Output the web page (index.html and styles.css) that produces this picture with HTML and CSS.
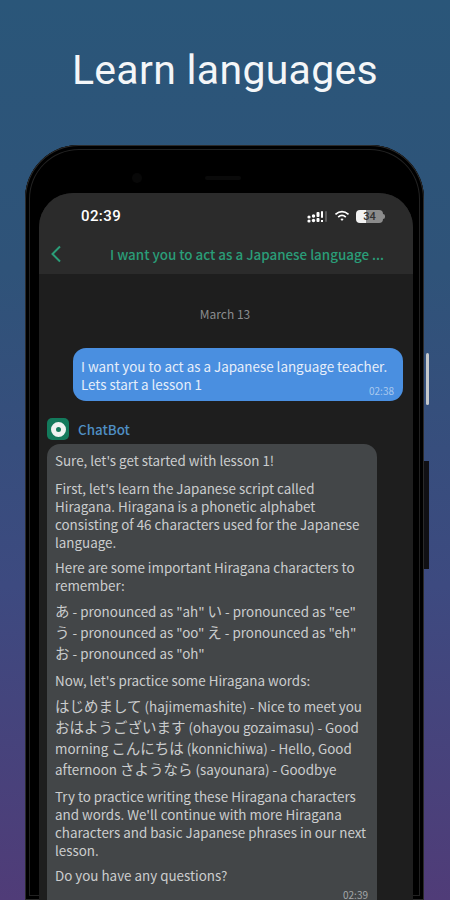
FILE: index.html
```html
<!DOCTYPE html>
<html>
<head>
    <title>Learn languages</title>
    <link rel="stylesheet" href="styles.css">
</head>
<body>
    <h1 class="headline">Learn languages</h1>

    <div class="phone">
        <div class="side-button volume"></div>
        <div class="side-button power"></div>
        <div class="camera"></div>
        <div class="speaker"></div>
        <div class="screen">
            <div class="top-bar">
                <div class="status-bar">
                    <span class="clock">02:39</span>
                    <div class="status-icons">
                        <svg class="signal" width="21" height="13" viewBox="0 0 21 13">
                            <g fill="#fff">
                                <circle cx="2" cy="7" r="1.6"/>
                                <circle cx="2" cy="11" r="1.6"/>
                                <circle cx="6.5" cy="6" r="1.7"/>
                                <circle cx="6.5" cy="10.5" r="1.7"/>
                                <rect x="9.5" y="2" width="3" height="5" rx="1"/>
                                <rect x="9.5" y="8" width="3" height="4" rx="1"/>
                                <rect x="14" y="1" width="2" height="7" rx="1"/>
                                <rect x="14" y="10" width="2" height="2"/>
                            </g>
                            <rect x="18" y="1" width="2" height="11" rx="1" fill="#5c5c5c"/>
                        </svg>
                        <svg class="wifi" width="16" height="12" viewBox="0 0 14 11">
                            <path d="M1 4 Q7 -1 13 4" fill="none" stroke="#fff" stroke-width="1.6"/>
                            <path d="M3.5 6.5 Q7 3.5 10.5 6.5" fill="none" stroke="#fff" stroke-width="1.6"/>
                            <path d="M5.5 8.3 L7 10 L8.5 8.3 Q7 7.2 5.5 8.3 Z" fill="#fff"/>
                        </svg>
                        <div class="battery"><span>34</span></div>
                    </div>
                </div>
                <div class="nav-bar">
                    <svg class="back" width="12" height="18" viewBox="0 0 12 18">
                        <path d="M10 1.5 L2.5 9 L10 16.5" fill="none" stroke="#2a9d78" stroke-width="2"/>
                    </svg>
                    <div class="chat-title">I want you to act as a Japanese language ...</div>
                </div>
            </div>

            <div class="messages">
                <div class="date">March 13</div>

                <div class="bubble-user">
                    <p>I want you to act as a Japanese language teacher. Lets start a lesson 1</p>
                    <span class="time">02:38</span>
                </div>

                <div class="bot-name">
                    <div class="bot-avatar"><div class="bot-dot"></div></div>
                    <span>ChatBot</span>
                </div>

                <div class="bubble-bot">
                    <p class="lead">Sure, let's get started with lesson 1!</p>
                    <p>First, let's learn the Japanese script called Hiragana. Hiragana is a phonetic alphabet consisting of 46 characters used for the Japanese language.</p>
                    <p>Here are some important Hiragana characters to remember:</p>
                    <p class="kana"><span class="jp">あ</span> - pronounced as "ah" <span class="jp">い</span> - pronounced as "ee" <span class="jp">う</span> - pronounced as "oo" <span class="jp">え</span> - pronounced as "eh" <span class="jp">お</span> - pronounced as "oh"</p>
                    <p>Now, let's practice some Hiragana words:</p>
                    <p class="kana"><span class="jp">はじめまして</span> (hajimemashite) - Nice to meet you <span class="jp">おはようございます</span> (ohayou gozaimasu) - Good morning <span class="jp">こんにちは</span> (konnichiwa) - Hello, Good afternoon <span class="jp">さようなら</span> (sayounara) - Goodbye</p>
                    <p>Try to practice writing these Hiragana characters and words. We'll continue with more Hiragana characters and basic Japanese phrases in our next lesson.</p>
                    <p>Do you have any questions?</p>
                    <span class="time">02:39</span>
                </div>
            </div>
        </div>
    </div>
</body>
</html>
```

FILE: styles.css
```css
html, body {
    height: 900px;
}

body {
    margin: 0;
    overflow: hidden;
    background: linear-gradient(180deg, #2a5679 0%, #2f5379 30%, #3d4a80 65%, #503c78 100%);
    font-family: "Noto Sans CJK JP", "Noto Sans", sans-serif;
    color: #cbcdce;
}

.headline {
    margin: 0;
    padding-top: 46px;
    height: 145px;
    box-sizing: border-box;
    text-align: center;
    font-family: Roboto, sans-serif;
    font-size: 41px;
    line-height: 48px;
    font-weight: 400;
    letter-spacing: 0.3px;
    color: #f4f6f8;
}

.phone {
    position: relative;
    box-sizing: border-box;
    width: 399px;
    height: 755px;
    margin-left: 25px;
    padding: 48px 11px 0 14px;
    background: #000;
    border-radius: 54px 54px 0 0;
    box-shadow: inset 0 0 0 1px #2a2a2a, inset 0 0 0 4px #000, inset 0 0 0 5px #222;
}

.side-button {
    position: absolute;
}

.volume {
    right: -5px;
    top: 208px;
    width: 3px;
    height: 52px;
    background: #c5c9cc;
    border-radius: 2px;
}

.power {
    right: -5px;
    top: 316px;
    width: 5px;
    height: 108px;
    background: #101014;
}

.camera {
    position: absolute;
    left: 107px;
    top: 28px;
    width: 10px;
    height: 10px;
    border-radius: 50%;
    background: #080808;
}

.speaker {
    position: absolute;
    left: 180px;
    top: 31px;
    width: 36px;
    height: 4px;
    border-radius: 2px;
    background: #0a0a0a;
}

.screen {
    height: 707px;
    background: #1e1e1e;
    border-radius: 34px 34px 0 0;
    overflow: hidden;
}

.top-bar {
    height: 81px;
    background: #2b2b2b;
}

.status-bar {
    display: flex;
    justify-content: space-between;
    align-items: center;
    height: 46px;
    padding: 0 30px 0 42px;
}

.clock {
    font-family: Roboto, sans-serif;
    font-size: 15px;
    font-weight: 500;
    letter-spacing: 0.4px;
    color: #fff;
}

.status-icons {
    display: flex;
    align-items: center;
    gap: 6px;
}

.battery {
    position: relative;
    width: 27px;
    height: 13px;
    border-radius: 4px;
    background: linear-gradient(90deg, #f2f2f2 0 38%, #8c8c8c 38% 100%);
    font-family: Roboto, sans-serif;
    font-size: 11px;
    line-height: 13px;
    font-weight: 500;
    text-align: center;
    color: #333;
}

.battery::after {
    content: "";
    position: absolute;
    right: -2px;
    top: 4px;
    width: 2px;
    height: 5px;
    border-radius: 0 2px 2px 0;
    background: #8c8c8c;
}

.nav-bar {
    display: flex;
    align-items: center;
    height: 30px;
    padding: 0 14px 0 11px;
}

.chat-title {
    flex: 1;
    min-width: 0;
    margin-left: 48px;
    white-space: nowrap;
    font-size: 13.4px;
    font-weight: 500;
    color: #2a9d78;
}

.messages {
    display: flex;
    flex-direction: column;
    padding: 0 10px 0 8px;
}

.date {
    margin-top: 32px;
    text-align: center;
    font-size: 12px;
    line-height: 16px;
    color: #8a8c8e;
}

.bubble-user {
    position: relative;
    align-self: flex-end;
    box-sizing: border-box;
    width: 330px;
    height: 53px;
    margin-top: 26px;
    padding: 9px 8px;
    background: #4a8fe0;
    border-radius: 13px;
    color: #e6eefa;
    font-size: 13.4px;
    line-height: 18px;
}

.bubble-user p {
    margin: 0;
}

.time {
    position: absolute;
    right: 9px;
    bottom: 4px;
    font-size: 10px;
    line-height: 12px;
    color: #a9c8ee;
}

.bot-name {
    display: flex;
    align-items: center;
    gap: 9px;
    margin-top: 17px;
    font-size: 13.4px;
    line-height: 22px;
    font-weight: 500;
    color: #4f8fc4;
}

.bot-avatar {
    display: flex;
    justify-content: center;
    align-items: center;
    width: 22px;
    height: 22px;
    background: #137a5c;
    border-radius: 5px;
}

.bot-dot {
    box-sizing: border-box;
    width: 15px;
    height: 15px;
    border: 5px solid #eef3f1;
    border-radius: 50%;
    background: #137a5c;
}

.bubble-bot {
    position: relative;
    box-sizing: border-box;
    width: 330px;
    margin-top: 4px;
    padding: 7px 8px 0;
    height: 470px;
    background: #434648;
    border-radius: 13px;
    font-size: 13.4px;
    line-height: 18px;
}

.bubble-bot p {
    margin: 0 0 7px;
}

.bubble-bot .lead {
    margin-bottom: 10px;
}

.bubble-bot .kana {
    line-height: 21px;
}

.jp {
    font-size: 14.5px;
    line-height: 1;
}

.bubble-bot .time {
    top: 445px;
    bottom: auto;
    color: #a4a7a9;
}
```
